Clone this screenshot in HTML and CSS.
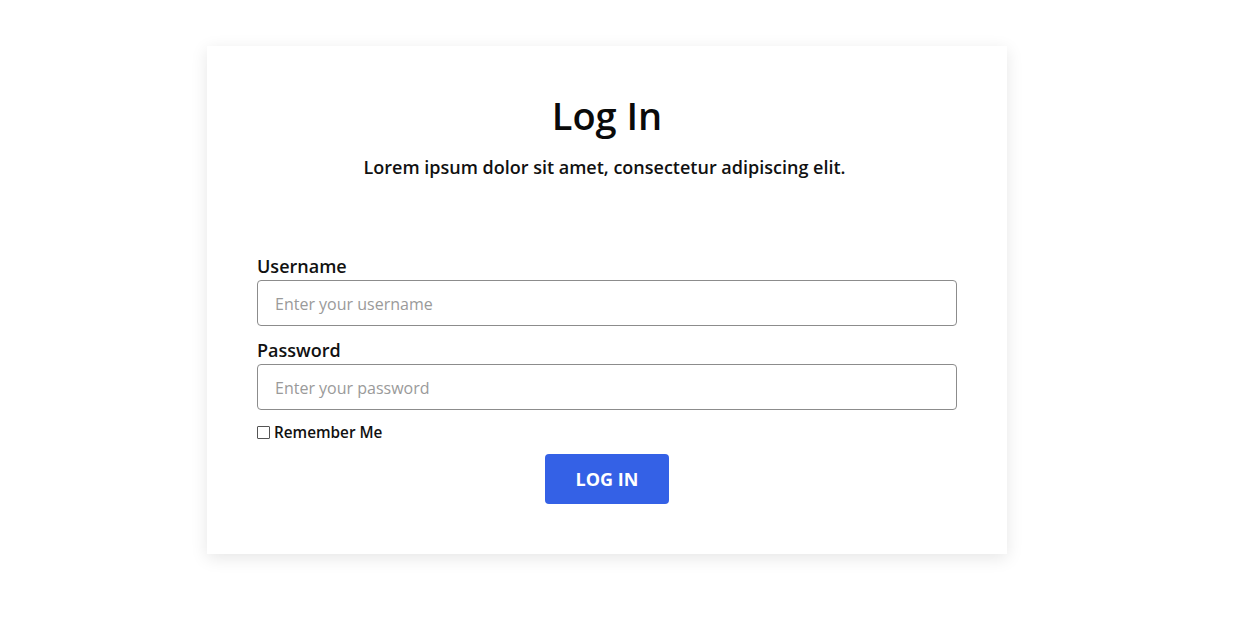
FILE: index.html
```html
<!DOCTYPE html>
<html lang="en">
<head>
<meta charset="utf-8">
<title>Log In</title>
<link rel="stylesheet" href="styles.css">
</head>
<body>
<main class="card">
  <h1 class="title">Log In</h1>
  <p class="subtitle">Lorem ipsum dolor sit amet, consectetur adipiscing elit.</p>
  <form class="form">
    <label class="label" for="username">Username</label>
    <input class="input" id="username" type="text" placeholder="Enter your username">
    <label class="label label-second" for="password">Password</label>
    <input class="input" id="password" type="password" placeholder="Enter your password">
    <label class="remember"><input type="checkbox" class="check"><span>Remember Me</span></label>
    <div class="actions"><button type="button" class="btn">LOG IN</button></div>
  </form>
</main>
</body>
</html>
```
FILE: styles.css
```css
* { box-sizing: border-box; }
html, body { margin: 0; padding: 0; background: #fff; }
body {
  font-family: "Open Sans", "Noto Sans", sans-serif;
  color: #111;
  padding-top: 46px;
  padding-bottom: 60px;
  min-height: 619px;
}
.card {
  width: 800px;
  margin-left: 207px;
  background: #fff;
  padding: 45px 50px 50px;
  box-shadow: 0 4px 16px rgba(0,0,0,0.10);
}
.title {
  margin: 0;
  text-align: center;
  font-size: 38px;
  font-weight: 600;
  line-height: 49px;
  color: #0a0a0a;
}
.subtitle {
  margin: 15px 0 0;
  padding-right: 5px;
  text-align: center;
  font-size: 18px;
  font-weight: 600;
  line-height: 24px;
  color: #111;
}
.form {
  display: flex;
  flex-direction: column;
  margin-top: 75px;
}
.label {
  font-size: 18px;
  font-weight: 600;
  line-height: 24px;
  margin-bottom: 2px;
  color: #111;
}
.label-second { margin-top: 12px; }
.input {
  height: 46px;
  width: 100%;
  border: 1px solid #8c8c8c;
  border-radius: 4px;
  padding: 1px 17px 0;
  font-family: inherit;
  font-size: 16px;
  color: #333;
  outline: none;
}
.input::placeholder { color: #9a9a9a; }
.remember {
  display: flex;
  align-items: center;
  margin-top: 12px;
  font-size: 15.3px;
  font-weight: 600;
  line-height: 20px;
  color: #111;
}
.check {
  appearance: none;
  -webkit-appearance: none;
  width: 13px;
  height: 13px;
  margin: 0 4px 0 0;
  border: 1px solid #555;
  border-radius: 1px;
  background: #fff;
}
.actions {
  display: flex;
  justify-content: center;
  margin-top: 12px;
}
.btn {
  width: 124px;
  height: 50px;
  border: none;
  border-radius: 4px;
  background: #3461e6;
  color: #fff;
  font-family: inherit;
  font-size: 18px;
  font-weight: 700;
  cursor: pointer;
}
```
